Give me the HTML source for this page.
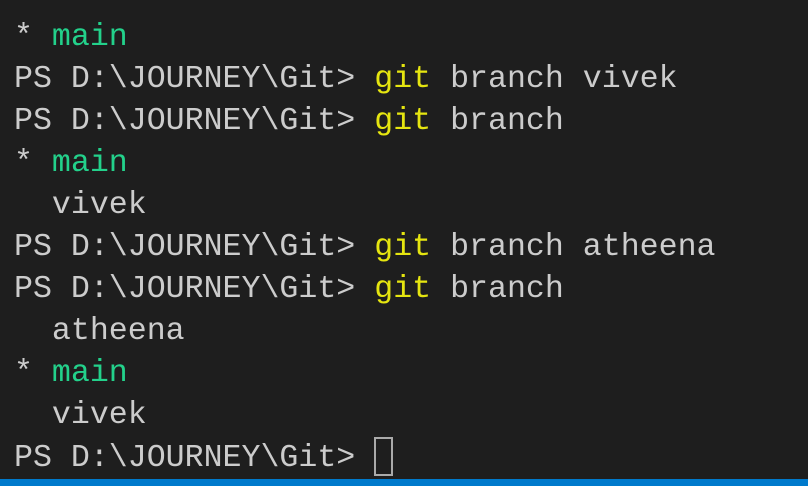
<!DOCTYPE html>
<html><head><style>
html,body{margin:0;padding:0;}
body{width:808px;height:486px;background:#1e1e1e;overflow:hidden;position:relative;}
pre{position:absolute;left:14px;top:17px;margin:0;font-family:"Liberation Mono",monospace;font-size:31.6px;line-height:42px;color:#cccccc;white-space:pre;}
.y{color:#e5e510}.g{color:#23d18b}
.cur{display:inline-block;width:19px;height:39px;border:2px solid #aaaaaa;vertical-align:-10px;box-sizing:border-box;}
.bar{position:absolute;left:0;top:479px;width:808px;height:7px;background:#007acc;}
</style></head><body>
<pre>* <span class="g">main</span>
PS D:\JOURNEY\Git&gt; <span class="y">git</span> branch vivek
PS D:\JOURNEY\Git&gt; <span class="y">git</span> branch
* <span class="g">main</span>
  vivek
PS D:\JOURNEY\Git&gt; <span class="y">git</span> branch atheena
PS D:\JOURNEY\Git&gt; <span class="y">git</span> branch
  atheena
* <span class="g">main</span>
  vivek
PS D:\JOURNEY\Git&gt; <span class="cur"></span></pre>
<div class="bar"></div>
</body></html>
